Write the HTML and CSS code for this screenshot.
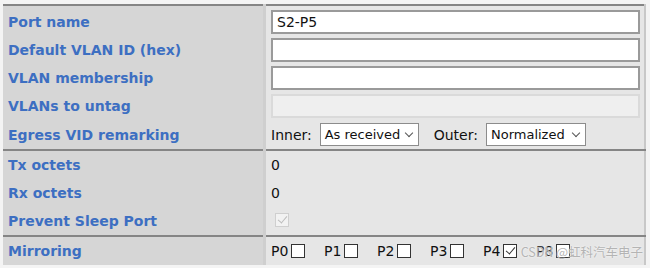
FILE: index.html
```html
<!DOCTYPE html>
<html lang="en">
<head>
    <meta charset="UTF-8">
    <title>Port Configuration</title>
    <link rel="stylesheet" href="styles.css">
</head>
<body>
    <div class="panel">
        <table class="config">
            <tr class="first">
                <td class="param">Port name</td>
                <td class="value"><input type="text" class="field" value="S2-P5"></td>
            </tr>
            <tr>
                <td class="param">Default VLAN ID (hex)</td>
                <td class="value"><input type="text" class="field"></td>
            </tr>
            <tr>
                <td class="param">VLAN membership</td>
                <td class="value"><input type="text" class="field"></td>
            </tr>
            <tr>
                <td class="param">VLANs to untag</td>
                <td class="value"><input type="text" class="field" disabled></td>
            </tr>
            <tr class="tall">
                <td class="param">Egress VID remarking</td>
                <td class="value">
                    <div class="remark">
                        <span>Inner:</span>
                        <span class="select inner">As received <i class="caret"></i></span>
                        <span class="outer-label">Outer:</span>
                        <span class="select outer">Normalized <i class="caret"></i></span>
                    </div>
                </td>
            </tr>
            <tr class="group">
                <td class="param">Tx octets</td>
                <td class="value">0</td>
            </tr>
            <tr>
                <td class="param">Rx octets</td>
                <td class="value">0</td>
            </tr>
            <tr>
                <td class="param">Prevent Sleep Port</td>
                <td class="value"><span class="box disabled checked"></span></td>
            </tr>
            <tr class="group">
                <td class="param">Mirroring</td>
                <td class="value">
                    <div class="ports">
                        <label class="port">P0 <span class="box"></span></label>
                        <label class="port">P1 <span class="box"></span></label>
                        <label class="port">P2 <span class="box"></span></label>
                        <label class="port">P3 <span class="box"></span></label>
                        <label class="port">P4 <span class="box checked"></span></label>
                        <label class="port">P8 <span class="box"></span></label>
                    </div>
                </td>
            </tr>
        </table>
        <div class="watermark">CSDN @虹科汽车电子</div>
    </div>
</body>
</html>
```

FILE: styles.css
```css
body {
    margin: 0;
    background: #f4f4f4;
    font-family: 'DejaVu Sans', Verdana, sans-serif;
}

.panel {
    position: relative;
    margin: 4px 4px 0 3px;
}

.config {
    width: 100%;
    border-collapse: collapse;
    border-top: 2px solid #858585;
    border-right: 2px solid #c8c8c8;
}

.config td {
    height: 28px;
    padding: 0;
}

.config tr.first td {
    height: 28px;
    padding-top: 2px;
}

.config tr.tall td {
    height: 29px;
}

.config tr.group td {
    border-top: 2px solid #858585;
}

.param {
    width: 255px;
    padding-left: 5px !important;
    background: #d6d6d6;
    color: #3d6fc2;
    font-size: 14px;
    font-weight: bold;
}

.value {
    background: #e6e6e6;
    border-left: 3px solid #cfcfcf;
    padding-left: 5px !important;
    padding-right: 4px !important;
    font-size: 14px;
    color: #111;
}

.field {
    display: block;
    box-sizing: border-box;
    width: 100%;
    height: 24px;
    margin: 0;
    padding: 0 4px;
    border: 2px solid #9a9a9a;
    background: #fff;
    font-family: 'DejaVu Sans', Verdana, sans-serif;
    font-size: 14px;
    color: #111;
}

.field:disabled {
    background: #efefef;
    border-color: #dadada;
}

.remark {
    display: flex;
    align-items: center;
}

.select {
    display: inline-flex;
    align-items: center;
    justify-content: space-between;
    box-sizing: border-box;
    height: 23px;
    margin-left: 8px;
    padding: 0 6px 0 4px;
    border: 1px solid #8c8c8c;
    background: #fff;
    font-size: 13px;
    white-space: nowrap;
}

.inner {
    width: 99px;
}

.outer {
    width: 100px;
}

.outer-label {
    margin-left: 15px;
}

.caret {
    flex: none;
    width: 5px;
    height: 5px;
    margin-top: -4px;
    border-right: 1px solid #555;
    border-bottom: 1px solid #555;
    transform: rotate(45deg);
}

.ports {
    display: flex;
    align-items: center;
}

.port {
    display: inline-flex;
    align-items: center;
    width: 53px;
}

.box {
    display: inline-block;
    position: relative;
    box-sizing: border-box;
    width: 14px;
    height: 14px;
    margin-left: 3px;
    border: 1px solid #333;
    background: #fff;
}

.box.checked::after {
    content: "";
    position: absolute;
    left: 4px;
    top: 0;
    width: 4px;
    height: 8px;
    border-right: 1px solid #333;
    border-bottom: 1px solid #333;
    transform: rotate(40deg);
}

.box.disabled {
    margin-left: 4px;
    border-color: #cfcfcf;
    background: #f2f2f2;
}

.box.disabled::after {
    border-color: #bdbdbd;
}

.watermark {
    position: absolute;
    right: 3px;
    bottom: 4px;
    font-family: 'Noto Sans CJK SC', sans-serif;
    font-size: 12.5px;
    color: #b4b4b4;
    text-shadow: 0 0 2px #fff;
}
```
